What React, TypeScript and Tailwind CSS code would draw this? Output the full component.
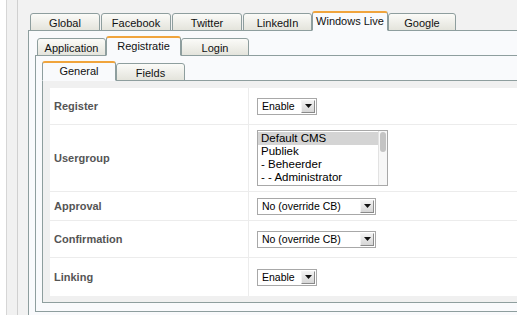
import React from "react";

const FONT = { fontFamily: '"Liberation Sans", Arial, sans-serif' };

function Tab({ label, active, w }: { label: string; active?: boolean; w: string }) {
  if (active) {
    return (
      <div
        className={`${w} h-[20px] relative z-10 -mb-px mx-[-1px] rounded-t-[3px] border border-[#8e9e9e] border-t-2 border-t-[#f0a43c] border-b-[#f9fafc] bg-[#f9fafc] pt-[1px] text-center text-[11px] leading-[14px] text-[#111]`}
      >
        {label}
      </div>
    );
  }
  return (
    <div
      className={`${w} h-[18px] relative -mb-px rounded-t-[3px] border border-[#8e9e9e] bg-gradient-to-b from-[#fbfbf8] to-[#e4e4dc] pt-[2px] text-center text-[11px] leading-[14px] text-[#111]`}
    >
      {label}
    </div>
  );
}

function Select({ value, w }: { value: string; w: string }) {
  return (
    <div className={`${w} h-[17px] flex items-center border border-[#a8a8a8] bg-white`}>
      <span className="flex-1 pl-[4px] text-[10.5px] leading-[14px] text-black">{value}</span>
      <span className="mr-[1px] flex h-[13px] w-[14px] items-center justify-center border border-t-[#f4f4f4] border-l-[#f4f4f4] border-r-[#8a8a8a] border-b-[#8a8a8a] bg-gradient-to-b from-[#f2f2f2] to-[#d6d6d6]">
        <svg width="7" height="4" viewBox="0 0 7 4">
          <path d="M0 0H7L3.5 4Z" fill="#111" />
        </svg>
      </span>
    </div>
  );
}

function Row({ label, h, children, last }: { label: string; h: string; children: React.ReactNode; last?: boolean }) {
  return (
    <div className={`flex ${h} ${last ? "" : "border-b border-[#ececec]"}`}>
      <div className="w-[199px] flex items-center border-r border-[#ececec] pl-[4px] text-[11px] font-bold text-[#555]">
        {label}
      </div>
      <div className="flex-1 flex items-center pl-[8px]">{children}</div>
    </div>
  );
}

export default function App() {
  return (
    <div className="w-[517px] h-[315px] overflow-hidden bg-[#f2f2f2] flex" style={FONT}>
      <div className="w-[7px] shrink-0 bg-white border-r border-[#d6d6d6]" />
      <div className="w-[11px] shrink-0 bg-[#f1f1f1] border-r border-[#d0d0d0]" />
      <div className="w-[620px] shrink-0 pl-[10px] pt-[11px]">
        {/* outer tabs */}
        <div className="flex items-end gap-[1px] pl-[2px]">
          <Tab label="Global" w="w-[70px]" />
          <Tab label="Facebook" w="w-[70px]" />
          <Tab label="Twitter" w="w-[70px]" />
          <Tab label="LinkedIn" w="w-[69px]" />
          <Tab label="Windows Live" w="w-[76px]" active />
          <Tab label="Google" w="w-[68px]" />
        </div>
        <div className="border border-[#8e9e9e] bg-[#f9fafc] pl-[6px] pt-[5px] pb-[20px]">
          {/* inner tabs */}
          <div className="flex items-end gap-[1px] pl-[2px]">
            <Tab label="Application" w="w-[69px]" />
            <Tab label="Registratie" w="w-[75px]" active />
            <Tab label="Login" w="w-[68px]" />
          </div>
          <div className="border border-[#8e9e9e] bg-[#f9fafc] pl-[6px] pt-[5px] pb-[8px]">
            {/* third tabs */}
            <div className="flex items-end gap-[1px] pl-[1px]">
              <Tab label="General" w="w-[74px]" active />
              <Tab label="Fields" w="w-[69px]" />
            </div>
            <div className="border border-[#8e9e9e] bg-[#f0f0f0] pl-[7px] pt-[7px] pb-[6px]">
              <div className="bg-white">
                <Row label="Register" h="h-[37px]">
                  <Select value="Enable" w="w-[60px]" />
                </Row>
                <Row label="Usergroup" h="h-[67px]">
                  <div className="w-[131px] h-[56px] border border-[#a8a8a8] bg-white flex text-[11.5px] leading-[13px] text-black">
                    <div className="flex-1 pt-[1px]">
                      <div className="bg-[#d4d4d4] pl-[3px]">Default CMS</div>
                      <div className="pl-[3px]">Publiek</div>
                      <div className="pl-[3px]">- Beheerder</div>
                      <div className="pl-[3px]">- - Administrator</div>
                    </div>
                    <div className="w-[9px] border-l border-[#e2e2e2] bg-[#f7f7f7] pt-[1px] flex justify-center">
                      <div className="w-[6px] h-[20px] rounded-[3px] bg-[#c4c4c4]" />
                    </div>
                  </div>
                </Row>
                <Row label="Approval" h="h-[29px]">
                  <Select value="No (override CB)" w="w-[119px]" />
                </Row>
                <Row label="Confirmation" h="h-[37px]">
                  <Select value="No (override CB)" w="w-[119px]" />
                </Row>
                <Row label="Linking" h="h-[38px]" last>
                  <Select value="Enable" w="w-[60px]" />
                </Row>
              </div>
            </div>
          </div>
        </div>
      </div>
    </div>
  );
}
